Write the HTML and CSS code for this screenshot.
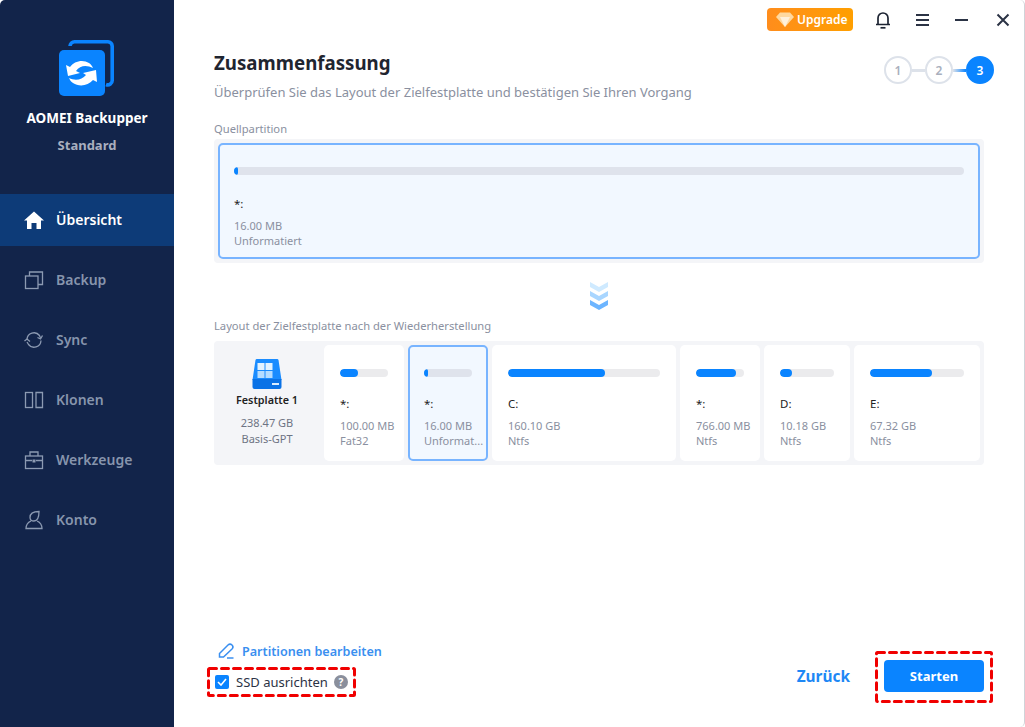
FILE: index.html
```html
<!DOCTYPE html>
<html lang="de">
<head>
<meta charset="utf-8">
<title>AOMEI Backupper</title>
<link rel="stylesheet" href="styles.css">
</head>
<body>
<div class="window">
  <aside class="sidebar">
    <svg class="logo" width="60" height="60" viewBox="0 0 60 60">
      <path d="M14 6 A4.500 4.500 0 0 1 18.500 1.800 H52 A4.500 4.500 0 0 1 56.200 6 V40 A4.500 4.500 0 0 1 50 44.500" fill="none" stroke="#0a84ff" stroke-width="3.600"/>
      <rect x="3" y="10" width="46" height="46" rx="5" fill="#0a84ff"/>
      <path d="M12 36 L10 25 L14 27 C18 21 27 19 33 23 C35 24 36 26 37 28 C31 25 24 25 20 31 L24 33 Z" fill="#fff"/>
      <path d="M40 30 L41 42 L37 40 C32 46 23 47 17 43 C15 42 14 40 13 38 C19 41 26 40 30 35 L27 33 Z" fill="#fff"/>
    </svg>
    <div class="brand">AOMEI Backupper</div>
    <div class="edition">Standard</div>
    <nav class="nav">
      <a class="nav-item active">
        <svg class="nav-icon" width="20" height="20" viewBox="0 0 20 20"><path d="M10 1.500 L20 10.500 H17 V19 H12.500 V13 H7.500 V19 H3 V10.500 H0 Z" fill="#fff"/></svg>
        <span>Übersicht</span>
      </a>
      <a class="nav-item">
        <svg class="nav-icon" width="20" height="20" viewBox="0 0 20 20" fill="none" stroke="#8c9ab2" stroke-width="1.300"><rect x="1.500" y="6" width="12.500" height="12.500"/><path d="M5.500 6 V2 H18.500 V14.500 H14"/></svg>
        <span>Backup</span>
      </a>
      <a class="nav-item">
        <svg class="nav-icon" width="20" height="20" viewBox="0 0 20 20" fill="none" stroke="#8c9ab2" stroke-width="1.300"><path d="M3 9.500 A7 7 0 0 1 15.500 5.500 L16.500 8"/><path d="M17 10.500 A7 7 0 0 1 4.500 14.500 L3 12"/><path d="M13.500 7.500 L16.500 9 L18.500 5.500"/><path d="M0.500 11 L3 9 L6 11.500"/></svg>
        <span>Sync</span>
      </a>
      <a class="nav-item">
        <svg class="nav-icon" width="20" height="20" viewBox="0 0 20 20" fill="none" stroke="#8c9ab2" stroke-width="1.300"><rect x="1.500" y="2.500" width="7" height="15"/><path d="M12 2.500 H18.500 V17.500 H12 Z"/></svg>
        <span>Klonen</span>
      </a>
      <a class="nav-item">
        <svg class="nav-icon" width="20" height="20" viewBox="0 0 20 20" fill="none" stroke="#8c9ab2" stroke-width="1.300"><rect x="1.500" y="6" width="17" height="12.500"/><path d="M6 6 V2 H14 V6"/><path d="M1.500 10.500 H8 M12 10.500 H18.500"/><rect x="8.500" y="9.500" width="3" height="3" fill="#8c9ab2" stroke="none"/></svg>
        <span>Werkzeuge</span>
      </a>
      <a class="nav-item">
        <svg class="nav-icon" width="20" height="20" viewBox="0 0 20 20" fill="none" stroke="#8c9ab2" stroke-width="1.300"><path d="M6 7.500 C6 3.500 8.500 1.500 15 1.500 C15 7 14 11 10 11 C7.500 11 6 10 6 7.500 Z"/><path d="M7 11 C3.500 12.500 2 15 2 18.500 H18 C18 15 16.500 12.500 13 11"/></svg>
        <span>Konto</span>
      </a>
    </nav>
  </aside>

  <main class="main">
    <div class="topbar">
      <div class="upgrade">
        <svg width="18" height="15" viewBox="0 0 18 15"><path d="M4 0.500 H14 L18 5 L9 15 L0 5 Z" fill="#ffd9a0"/><path d="M4 5 H14 L9 15 Z" fill="#fff1dc"/></svg>
        <span>Upgrade</span>
      </div>
      <svg class="tb-icon bell" width="16" height="18" viewBox="0 0 16 18" fill="none" stroke="#1d2433" stroke-width="1.700"><path d="M1 13.500 H15 M3 13.500 V7 A5 5 0 0 1 13 7 V13.500"/><path d="M5.500 16.800 H10.500"/></svg>
      <svg class="tb-icon menu" width="14" height="14" viewBox="0 0 14 14" fill="#2b3345"><rect y="1" width="13" height="2"/><rect y="6" width="13" height="2"/><rect y="11" width="13" height="2"/></svg>
      <svg class="tb-icon min" width="14" height="14" viewBox="0 0 14 14" fill="#2b3345"><rect y="6" width="13" height="2"/></svg>
      <svg class="tb-icon close" width="14" height="14" viewBox="0 0 14 14" fill="none" stroke="#2b3345" stroke-width="2"><path d="M1.500 1.500 L12.500 12.500 M12.500 1.500 L1.500 12.500"/></svg>
    </div>

    <header class="head">
      <div>
        <h1 class="title">Zusammenfassung</h1>
        <p class="subtitle">Überprüfen Sie das Layout der Zielfestplatte und bestätigen Sie Ihren Vorgang</p>
      </div>
      <div class="stepper">
        <span class="step">1</span><span class="link"></span>
        <span class="step">2</span><span class="link link-on"></span>
        <span class="step step-on">3</span>
      </div>
    </header>

    <div class="label label-src">Quellpartition</div>
    <div class="source-wrap">
      <div class="source selected">
        <div class="track track-src"><div class="fill fill-src"></div></div>
        <div class="drive">*:</div>
        <div class="meta">16.00 MB</div>
        <div class="meta">Unformatiert</div>
      </div>
    </div>

    <div class="arrows">
      <svg width="20" height="30" viewBox="0 0 20 30">
        <path d="M1 1 L10 6 L19 1 V6 L10 11 L1 6 Z" fill="#cfeaff"/>
        <path d="M1 10 L10 15 L19 10 V15 L10 20 L1 15 Z" fill="#a9d6ff"/>
        <path d="M1 19 L10 24 L19 19 V24 L10 29 L1 24 Z" fill="#6db5ff"/>
      </svg>
    </div>

    <div class="label label-dst">Layout der Zielfestplatte nach der Wiederherstellung</div>
    <div class="disk-row">
      <div class="disk">
        <svg width="30" height="30" viewBox="0 0 30 30">
          <path d="M3.500 1 A1.500 1.500 0 0 1 5 0 H25 A1.500 1.500 0 0 1 26.500 1 L29.500 21 H0.500 Z" fill="#1a8cff"/>
          <path d="M0.500 20 H29.500 V28 A2 2 0 0 1 27.500 30 H2.500 A2 2 0 0 1 0.500 28 Z" fill="#0a72e6"/>
          <rect x="5.500" y="4" width="7" height="7" fill="#e3f2ff"/><rect x="13.500" y="4" width="7" height="7" fill="#e3f2ff"/>
          <rect x="5.500" y="12" width="7" height="7" fill="#b5dcff"/><rect x="13.500" y="12" width="7" height="7" fill="#b5dcff"/>
          <rect x="20" y="24" width="7" height="2" fill="#d8ecff"/>
        </svg>
        <div class="disk-name">Festplatte 1</div>
        <div class="disk-meta">238.47 GB</div>
        <div class="disk-meta">Basis-GPT</div>
      </div>
      <div class="part w80">
        <div class="track"><div class="fill" style="width:37%"></div></div>
        <div class="drive">*:</div><div class="meta">100.00 MB</div><div class="meta">Fat32</div>
      </div>
      <div class="part w80 selected">
        <div class="track track-sel"><div class="fill" style="width:8%"></div></div>
        <div class="drive">*:</div><div class="meta">16.00 MB</div><div class="meta">Unformat...</div>
      </div>
      <div class="part w184">
        <div class="track"><div class="fill" style="width:64%"></div></div>
        <div class="drive">C:</div><div class="meta">160.10 GB</div><div class="meta">Ntfs</div>
      </div>
      <div class="part w80">
        <div class="track"><div class="fill" style="width:83%"></div></div>
        <div class="drive">*:</div><div class="meta">766.00 MB</div><div class="meta">Ntfs</div>
      </div>
      <div class="part w86">
        <div class="track"><div class="fill" style="width:22%"></div></div>
        <div class="drive">D:</div><div class="meta">10.18 GB</div><div class="meta">Ntfs</div>
      </div>
      <div class="part w126">
        <div class="track"><div class="fill" style="width:66%"></div></div>
        <div class="drive">E:</div><div class="meta">67.32 GB</div><div class="meta">Ntfs</div>
      </div>
    </div>

    <footer class="footer">
      <div class="foot-left">
        <a class="edit">
          <svg width="16" height="16" viewBox="0 0 16 16" fill="none" stroke="#3a8ff0" stroke-width="1.500"><path d="M1.500 14 L1.500 10.500 L10 2 A1.800 1.800 0 0 1 14 6 L5.500 14 Z"/><path d="M9 15 H15.500"/></svg>
          <span>Partitionen bearbeiten</span>
        </a>
        <div class="annot ssd">
          <svg class="dash" width="149" height="30"><rect x="1.500" y="1.500" width="146" height="27" rx="1" class="dash-rect"/></svg>
          <span class="check"><svg width="10" height="8" viewBox="0 0 10 8" fill="none" stroke="#fff" stroke-width="1.600"><path d="M1 4 L4 7 L9 1"/></svg></span>
          <span class="ssd-text">SSD ausrichten</span>
          <span class="help">?</span>
        </div>
      </div>
      <div class="foot-right">
        <a class="back">Zurück</a>
        <div class="annot start-box">
          <svg class="dash" width="118" height="52"><rect x="1.500" y="1.500" width="115" height="49" rx="1" class="dash-rect"/></svg>
          <button class="start">Starten</button>
        </div>
      </div>
    </footer>
  </main>
</div>
</body>
</html>
```
FILE: styles.css
```css
* { box-sizing: border-box; }
html, body { margin: 0; height: 100%; background: #fff; }
body { font-family: "Noto Sans", "Open Sans", "Liberation Sans", sans-serif; overflow: hidden; }
.window { display: flex; width: 1025px; height: 727px; border-right: 1px solid #d0d3d8; border-radius: 5px 5px 5px 0; overflow: hidden; }

.sidebar { width: 174px; flex: none; background: #12244a; display: flex; flex-direction: column; align-items: center; padding-top: 40px; }
.logo { margin-right: 2px; }
.brand { margin-top: 8px; color: #fff; font-weight: 700; font-size: 13.500px; line-height: 20px; }
.edition { margin-top: 7px; color: #a9afbf; font-weight: 700; font-size: 13px; line-height: 20px; }
.nav { width: 100%; margin-top: 39px; display: flex; flex-direction: column; gap: 8px; }
.nav-item { height: 52px; display: flex; align-items: center; gap: 12px; padding: 0 0 1px 24px; color: #8795ad; font-size: 14px; font-weight: 600; }
.nav-item.active { background: #0d3b78; color: #fff; }
.nav-icon { flex: none; }

.main { flex: 1; min-width: 0; display: flex; flex-direction: column; padding: 0 40px; }
.topbar { height: 40px; margin-right: -40px; display: flex; align-items: flex-start; padding-top: 8px; }
.upgrade { margin-left: auto; width: 86px; height: 23px; border-radius: 4px; background: linear-gradient(90deg, #ff8d1c, #ff9f00); color: #fff; font-size: 12px; font-weight: 600; display: flex; align-items: center; gap: 3px; padding-left: 9px; }
.tb-icon { flex: none; }
.bell { margin: 3px 0 0 22px; }
.menu { margin: 5px 0 0 25px; }
.min { margin: 5px 0 0 25px; }
.close { margin: 5px 14px 0 27px; }

.head { display: flex; justify-content: space-between; align-items: flex-start; margin-top: 9px; }
.title { margin: 0; font-size: 18.700px; line-height: 28px; font-weight: 700; color: #1f2530; }
.subtitle { margin: 5px 0 0; font-size: 13px; line-height: 20px; color: #8a90a0; }
.stepper { display: flex; align-items: center; margin: 7px -10px 0 0; }
.step { width: 28px; height: 28px; border-radius: 50%; border: 2px solid #dde2ea; color: #a9afbd; font-size: 12px; font-weight: 600; display: flex; align-items: center; justify-content: center; }
.step-on { background: #0a84ff; border-color: #0a84ff; color: #fff; }
.link { width: 13px; height: 3px; background: #dde2ea; }
.link-on { background: linear-gradient(90deg, #dde2ea, #0a84ff); }

.label { font-size: 11.200px; line-height: 16px; color: #8a90a0; }
.label-src { margin-top: 19px; }
.source-wrap { margin-top: 2px; background: #f4f5f8; padding: 4px; border-radius: 4px; }
.selected { background: #f2f8ff; border: 2px solid #78b4ff; border-radius: 5px; }
.source { height: 116px; padding: 22px 14px 0; }
.track { height: 8px; border-radius: 4px; background: #ebebed; overflow: hidden; }
.track-src { background: #dfe3ec; }
.track-sel { background: #dfe3ec; }
.fill { height: 100%; border-radius: 4px; background: #0a84ff; }
.fill-src { width: 4px; }
.drive { margin-top: 19px; font-size: 11.500px; line-height: 16px; color: #222; }
.source .drive { margin-top: 21px; }
.meta { font-size: 11px; line-height: 15px; color: #8a90a0; white-space: nowrap; }
.drive + .meta { margin-top: 6px; }

.arrows { margin-top: 18px; height: 30px; display: flex; justify-content: center; }
.label-dst { margin-top: 7px; }
.disk-row { margin-top: 7px; height: 124px; background: #f4f5f8; border-radius: 4px; padding: 4px; display: flex; gap: 4px; }
.disk { width: 102px; flex: none; display: flex; flex-direction: column; align-items: center; padding: 14px 4px 0 0; }
.disk-name { margin-top: 2px; font-size: 10.800px; line-height: 18px; font-weight: 600; color: #222; }
.disk-meta { font-size: 11px; line-height: 16px; color: #6e7484; }
.disk-name + .disk-meta { margin-top: 6px; }
.part { background: #fff; border-radius: 5px; padding: 24px 16px 0; overflow: hidden; flex: none; height: 116px; }
.part.selected { background: #f2f8ff; padding: 22px 14px 0; }
.w80 { width: 80px; }
.w184 { width: 184px; }
.w86 { width: 86px; }
.w126 { width: 126px; }

.footer { margin-top: auto; height: 63px; display: flex; justify-content: space-between; margin-bottom: 24px; }
.foot-left { display: flex; flex-direction: column; }
.edit { display: flex; align-items: center; gap: 8px; margin-left: 4px; height: 22px; color: #3a8ff0; font-size: 12.600px; font-weight: 600; }
.annot { position: relative; }
.dash { position: absolute; inset: 0; pointer-events: none; }
.dash-rect { fill: none; stroke: #f00000; stroke-width: 3; stroke-dasharray: 7 5; stroke-linecap: round; }
.ssd { margin: 5px 0 0 -7px; width: 149px; height: 30px; display: flex; align-items: center; padding-left: 8px; }
.check { width: 14px; height: 14px; border-radius: 2px; background: #0a84ff; display: flex; align-items: center; justify-content: center; }
.ssd-text { margin-left: 7px; font-size: 13px; color: #2b3345; }
.help { margin-left: 6px; width: 14px; height: 14px; border-radius: 50%; background: #8a8f9c; color: #fff; font-size: 10px; font-weight: 700; display: flex; align-items: center; justify-content: center; }
.foot-right { display: flex; align-items: flex-start; margin: auto -9px 0 0; }
.back { margin-top: 15px; color: #1e88f5; font-size: 15.400px; font-weight: 700; line-height: 22px; }
.start-box { margin-left: 25px; width: 118px; height: 52px; display: flex; padding: 9px; }
.start { width: 100px; height: 32px; border: 0; border-radius: 4px; background: #0a84ff; color: #fff; font: 700 13px "Noto Sans", "Open Sans", sans-serif; }
```
